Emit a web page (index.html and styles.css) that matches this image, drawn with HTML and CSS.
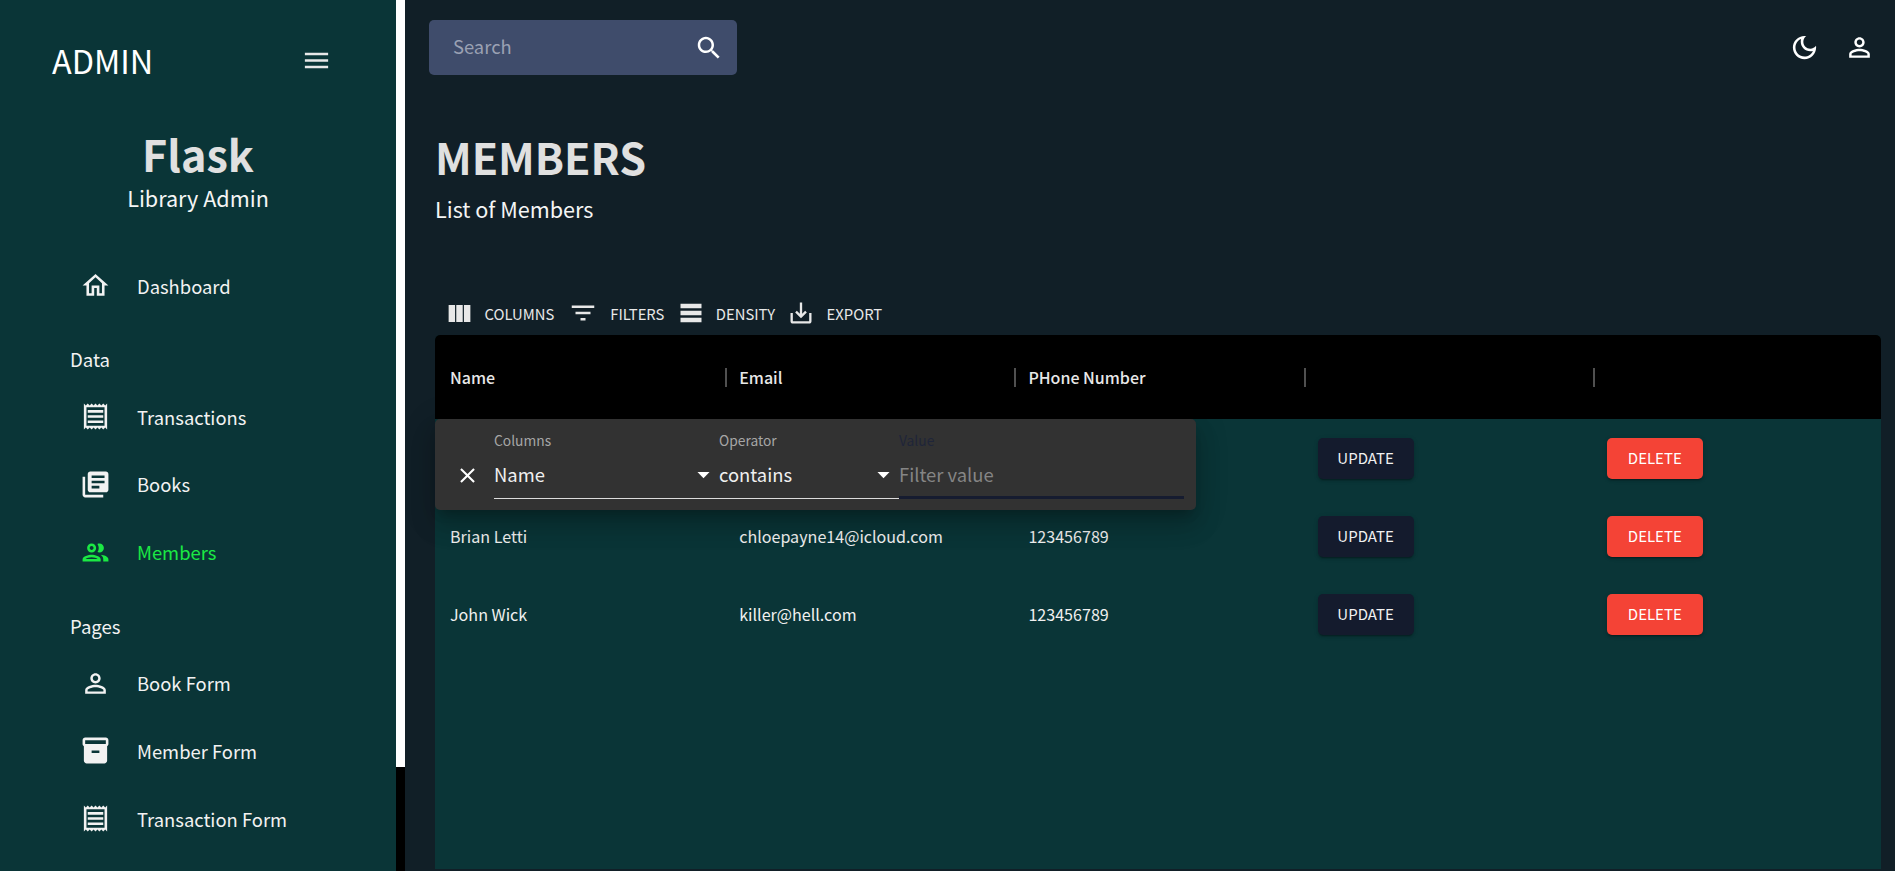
FILE: index.html
```html
<!DOCTYPE html>
<html lang="en">
<head>
  <meta charset="UTF-8">
  <meta name="viewport" content="width=device-width, initial-scale=1.0">
  <title>Library Admin</title>
  <link rel="stylesheet" href="styles.css">
</head>
<body>
  <div class="app">
    <!-- Sidebar -->
    <aside class="sidebar">
      <div class="brand-row">
        <span class="brand">ADMIN</span>
        <svg class="menu-icon" viewBox="0 0 24 24"><path d="M3 18h18v-2H3v2zm0-5h18v-2H3v2zm0-7v2h18V6H3z"/></svg>
      </div>
      <div class="profile">
        <div class="profile-name">Flask</div>
        <div class="profile-role">Library Admin</div>
      </div>
      <nav class="nav">
        <a class="nav-item">
          <svg class="icon" viewBox="0 0 24 24"><path d="M12 5.69l5 4.5V18h-2v-6H9v6H7v-7.81l5-4.5M12 3L2 12h3v8h6v-6h2v6h6v-8h3L12 3z"/></svg>
          Dashboard
        </a>
        <div class="nav-title nav-title-data">Data</div>
        <a class="nav-item">
          <svg class="icon" viewBox="0 0 24 24"><path d="M19.5 3.5 18 2l-1.5 1.5L15 2l-1.5 1.5L12 2l-1.5 1.5L9 2 7.5 3.5 6 2 4.5 3.5 3 2v20l1.5-1.5L6 22l1.5-1.5L9 22l1.5-1.5L12 22l1.5-1.5L15 22l1.5-1.5L18 22l1.5-1.5L21 22V2l-1.5 1.5zM19 19.09H5V4.91h14v14.18zM6 15h12v2H6zm0-4h12v2H6zm0-4h12v2H6z"/></svg>
          Transactions
        </a>
        <a class="nav-item">
          <svg class="icon" viewBox="0 0 24 24"><path d="M4 6H2v14c0 1.1.9 2 2 2h14v-2H4V6zm16-4H8c-1.1 0-2 .9-2 2v12c0 1.1.9 2 2 2h12c1.1 0 2-.9 2-2V4c0-1.1-.9-2-2-2zm-1 9H9V9h10v2zm-4 4H9v-2h6v2zm4-8H9V5h10v2z"/></svg>
          Books
        </a>
        <a class="nav-item active">
          <svg class="icon" viewBox="0 0 24 24"><path d="M9 13.75c-2.34 0-7 1.17-7 3.5V19h14v-1.75c0-2.33-4.66-3.5-7-3.5zM4.34 17c.84-.58 2.87-1.25 4.66-1.25s3.82.67 4.66 1.25H4.34zM9 12c1.93 0 3.5-1.57 3.5-3.5S10.93 5 9 5 5.5 6.57 5.5 8.5 7.07 12 9 12zm0-5c.83 0 1.5.67 1.5 1.5S9.83 10 9 10s-1.5-.67-1.5-1.5S8.17 7 9 7zm7.04 6.81c1.16.84 1.96 1.96 1.96 3.44V19h4v-1.75c0-2.02-3.5-3.17-5.96-3.44zM15 12c1.93 0 3.5-1.57 3.5-3.5S16.93 5 15 5c-.54 0-1.04.13-1.5.35.63.89 1 1.98 1 3.15s-.37 2.26-1 3.15c.46.22.96.35 1.5.35z"/></svg>
          Members
        </a>
        <div class="nav-title nav-title-pages">Pages</div>
        <a class="nav-item">
          <svg class="icon" viewBox="0 0 24 24"><path d="M12 5.9c1.16 0 2.1.94 2.1 2.1s-.94 2.1-2.1 2.1S9.9 9.16 9.9 8s.94-2.1 2.1-2.1m0 9c2.97 0 6.1 1.46 6.1 2.1v1.1H5.9V17c0-.64 3.13-2.1 6.1-2.1M12 4C9.79 4 8 5.79 8 8s1.79 4 4 4 4-1.79 4-4-1.79-4-4-4zm0 9c-2.67 0-8 1.34-8 4v3h16v-3c0-2.66-5.33-4-8-4z"/></svg>
          Book Form
        </a>
        <a class="nav-item">
          <svg class="icon" viewBox="0 0 24 24"><path d="M20 2H4c-1 0-2 .9-2 2v3.01c0 .72.43 1.34 1 1.69V20c0 1.1 1.1 2 2 2h14c.9 0 2-.9 2-2V8.7c.57-.35 1-.97 1-1.69V4c0-1.1-1-2-2-2zm-5 12H9v-2h6v2zm5-7H4V4l16-.02V7z"/></svg>
          Member Form
        </a>
        <a class="nav-item">
          <svg class="icon" viewBox="0 0 24 24"><path d="M19.5 3.5 18 2l-1.5 1.5L15 2l-1.5 1.5L12 2l-1.5 1.5L9 2 7.5 3.5 6 2 4.5 3.5 3 2v20l1.5-1.5L6 22l1.5-1.5L9 22l1.5-1.5L12 22l1.5-1.5L15 22l1.5-1.5L18 22l1.5-1.5L21 22V2l-1.5 1.5zM19 19.09H5V4.91h14v14.18zM6 15h12v2H6zm0-4h12v2H6zm0-4h12v2H6z"/></svg>
          Transaction Form
        </a>
      </nav>
    </aside>

    <!-- White strip next to the sidebar -->
    <div class="strip"></div>

    <main class="main">
      <header class="topbar">
        <div class="search">
          <span class="search-text">Search</span>
          <svg class="icon" viewBox="0 0 24 24"><path d="M15.5 14h-.79l-.28-.27C15.41 12.59 16 11.11 16 9.5 16 5.91 13.09 3 9.5 3S3 5.91 3 9.5 5.91 16 9.5 16c1.61 0 3.09-.59 4.23-1.57l.27.28v.79l5 4.99L20.49 19l-4.99-5zm-6 0C7.01 14 5 11.99 5 9.5S7.01 5 9.5 5 14 7.01 14 9.5 11.99 14 9.5 14z"/></svg>
        </div>
        <div class="top-icons">
          <svg class="icon" viewBox="0 0 24 24"><path d="M9.37 5.51c-.18.64-.27 1.31-.27 1.99 0 4.08 3.32 7.4 7.4 7.4.68 0 1.35-.09 1.99-.27C17.45 17.19 14.93 19 12 19c-3.86 0-7-3.14-7-7 0-2.93 1.81-5.45 4.37-6.49zM12 3c-4.97 0-9 4.03-9 9s4.03 9 9 9 9-4.03 9-9c0-.46-.04-.92-.1-1.36-.98 1.37-2.58 2.26-4.4 2.26-2.98 0-5.4-2.42-5.4-5.4 0-1.81.89-3.42 2.26-4.4-.44-.06-.9-.1-1.36-.1z"/></svg>
          <svg class="icon" viewBox="0 0 24 24"><path d="M12 5.9c1.16 0 2.1.94 2.1 2.1s-.94 2.1-2.1 2.1S9.9 9.16 9.9 8s.94-2.1 2.1-2.1m0 9c2.97 0 6.1 1.46 6.1 2.1v1.1H5.9V17c0-.64 3.13-2.1 6.1-2.1M12 4C9.79 4 8 5.79 8 8s1.79 4 4 4 4-1.79 4-4-1.79-4-4-4zm0 9c-2.67 0-8 1.34-8 4v3h16v-3c0-2.66-5.33-4-8-4z"/></svg>
        </div>
      </header>

      <section class="content">
        <h1 class="page-title">MEMBERS</h1>
        <p class="page-sub">List of Members</p>

        <!-- Grid toolbar -->
        <div class="toolbar">
          <span class="tool tool-columns">
            <svg class="icon" viewBox="0 0 24 24"><path d="M14.67 5v14H9.33V5h5.34zm1 14H21V5h-5.33v14zm-7.34 0V5H3v14h5.33z"/></svg>
            COLUMNS
          </span>
          <span class="tool tool-filters">
            <svg class="icon" viewBox="0 0 24 24"><path d="M10 18h4v-2h-4v2zM3 6v2h18V6H3zm3 7h12v-2H6v2z"/></svg>
            FILTERS
          </span>
          <span class="tool tool-density">
            <svg class="icon" viewBox="0 0 24 24"><path d="M21 8H3V4h18v4zm0 2H3v4h18v-4zm0 6H3v4h18v-4z"/></svg>
            DENSITY
          </span>
          <span class="tool tool-export">
            <svg class="icon" viewBox="0 0 24 24"><path d="M19 12v7H5v-7H3v7c0 1.1.9 2 2 2h14c1.1 0 2-.9 2-2v-7h-2zm-6 .67l2.59-2.58L17 11.5l-5 5-5-5 1.41-1.41L11 12.67V3h2z"/></svg>
            EXPORT
          </span>
        </div>

        <!-- Data grid -->
        <div class="grid">
          <div class="grid-head">
            <div class="head-cell">Name</div>
            <div class="head-cell"><i class="sep"></i>Email</div>
            <div class="head-cell"><i class="sep"></i>PHone Number</div>
            <div class="head-cell"><i class="sep"></i></div>
            <div class="head-cell"><i class="sep"></i></div>
          </div>

          <div class="grid-row">
            <div class="cell"></div>
            <div class="cell"></div>
            <div class="cell"></div>
            <div class="cell"><button class="btn btn-update">UPDATE</button></div>
            <div class="cell"><button class="btn btn-delete">DELETE</button></div>
          </div>
          <div class="grid-row">
            <div class="cell">Brian Letti</div>
            <div class="cell">chloepayne14@icloud.com</div>
            <div class="cell">123456789</div>
            <div class="cell"><button class="btn btn-update">UPDATE</button></div>
            <div class="cell"><button class="btn btn-delete">DELETE</button></div>
          </div>
          <div class="grid-row">
            <div class="cell">John Wick</div>
            <div class="cell">killer@hell.com</div>
            <div class="cell">123456789</div>
            <div class="cell"><button class="btn btn-update">UPDATE</button></div>
            <div class="cell"><button class="btn btn-delete">DELETE</button></div>
          </div>

          <!-- Filter panel, open over the first row -->
          <div class="filter-panel">
            <svg class="icon close-icon" viewBox="0 0 24 24"><path d="M19 6.41 17.59 5 12 10.59 6.41 5 5 6.41 10.59 12 5 17.59 6.41 19 12 13.41 17.59 19 19 17.59 13.41 12z"/></svg>
            <div class="field field-columns">
              <label class="field-label">Columns</label>
              <div class="field-control">
                <span class="field-value">Name</span>
                <svg class="icon arrow-icon" viewBox="0 0 24 24"><path d="M7 10l5 5 5-5z"/></svg>
              </div>
            </div>
            <div class="field field-operator">
              <label class="field-label">Operator</label>
              <div class="field-control">
                <span class="field-value">contains</span>
                <svg class="icon arrow-icon" viewBox="0 0 24 24"><path d="M7 10l5 5 5-5z"/></svg>
              </div>
            </div>
            <div class="field field-input">
              <label class="field-label label-dark">Value</label>
              <div class="field-control control-focus">
                <span class="field-value placeholder">Filter value</span>
              </div>
            </div>
          </div>
        </div>
      </section>
    </main>
  </div>
</body>
</html>
```

FILE: styles.css
```css
* {
  box-sizing: border-box;
}

html, body {
  margin: 0;
  height: 100%;
  overflow: hidden;
}

body {
  font-family: "Noto Sans CJK SC", "Noto Sans", sans-serif;
  color: #e0e0e0;
  background: #000;
}

.app {
  display: flex;
  height: 871px;
}

.icon {
  width: 29px;
  height: 29px;
  fill: currentColor;
  flex: none;
}

/* Sidebar */
.sidebar {
  width: 396px;
  flex: none;
  background: #0a3537;
  overflow: hidden;
}

.brand-row {
  display: flex;
  align-items: center;
  justify-content: space-between;
  padding: 36px 64px 0 52px;
  height: 84px;
}

.brand {
  font-size: 32.4px;
  line-height: 48px;
  color: #fff;
}

.menu-icon {
  width: 31px;
  height: 31px;
  fill: #e8e8e8;
}

.profile {
  text-align: center;
  margin-top: 39px;
}

.profile-name {
  font-size: 43.2px;
  line-height: 60px;
  font-weight: 700;
  color: #e0e0e0;
}

.profile-role {
  font-size: 21.6px;
  line-height: 30px;
  color: #f5f5f5;
}

.nav {
  margin-top: 39px;
}

.nav-item {
  display: flex;
  align-items: center;
  gap: 26px;
  height: 67.8px;
  padding-left: 80px;
  font-size: 18.4px;
  color: #f2f2f2;
}

.nav-item .icon {
  width: 31px;
  height: 31px;
}

.nav-item.active {
  color: #1be944;
}

.nav-title {
  font-size: 18.6px;
  line-height: 28px;
  padding-left: 70px;
  color: #f2f2f2;
}

.nav-title-data {
  margin-top: 25px;
  margin-bottom: 10px;
}

.nav-title-pages {
  margin-top: 26px;
  margin-bottom: 9px;
}

/* Strip between sidebar and main */
.strip {
  width: 9px;
  height: 767px;
  flex: none;
  background: #fff;
}

/* Main area */
.main {
  flex: 1;
  min-width: 0;
  background: #111f27;
}

.topbar {
  display: flex;
  justify-content: space-between;
  align-items: center;
  height: 95px;
  padding: 0 20px 0 24px;
}

.search {
  display: flex;
  align-items: center;
  justify-content: space-between;
  width: 308px;
  height: 55px;
  padding: 0 13px 0 24px;
  background: #3f4c6b;
  border-radius: 5px;
  color: #fff;
}

.search .icon {
  width: 30px;
  height: 30px;
}

.search-text {
  font-size: 18.4px;
  line-height: 24px;
  margin-top: -3px;
  color: #9aa1b3;
}

.top-icons {
  display: flex;
  gap: 24px;
  color: #fff;
}

.top-icons .icon {
  width: 31px;
  height: 31px;
}

.content {
  padding: 33px 14px 0 30px;
}

.page-title {
  margin: 0;
  font-size: 43px;
  line-height: 56px;
  font-weight: 700;
  color: #e0e0e0;
}

.page-sub {
  margin: 10px 0 0;
  font-size: 21.6px;
  line-height: 30px;
  color: #f5f5f5;
}

/* Toolbar */
.toolbar {
  display: flex;
  align-items: center;
  height: 36px;
  margin-top: 71px;
  font-size: 14.8px;
  color: #e8e8e8;
}

.tool {
  display: flex;
  align-items: center;
  gap: 12px;
}

.tool-columns {
  gap: 11px;
  margin-left: 9.5px;
}

.tool-filters {
  margin-left: 14px;
}

.tool-filters .icon {
  width: 30px;
  height: 30px;
}

.tool-density {
  gap: 11px;
  margin-left: 12.5px;
}

.tool-density .icon,
.tool-export .icon {
  width: 28px;
  height: 28px;
}

.tool-export {
  margin-left: 11.5px;
}

/* Data grid */
.grid {
  position: relative;
  height: 534px;
  margin-top: 4px;
  background: #0a3537;
  border-radius: 5px 5px 0 0;
}

.grid-head,
.grid-row {
  display: grid;
  grid-template-columns: repeat(5, 1fr);
}

.grid-head {
  height: 84px;
  background: #000;
  border-radius: 5px 5px 0 0;
}

.head-cell {
  display: flex;
  align-items: center;
  padding-left: 15px;
  font-size: 16px;
  font-weight: 500;
  color: #e8e8e8;
}

.sep {
  width: 2px;
  height: 19px;
  margin: 0 12px 0 -14px;
  background: #505050;
}

.grid-row {
  height: 78px;
}

.cell {
  display: flex;
  align-items: center;
  padding-left: 15px;
  font-size: 16.1px;
  color: #f0f0f0;
}

.btn {
  width: 96px;
  height: 41px;
  padding: 0 0 2px;
  border: 0;
  border-radius: 5px;
  font-family: inherit;
  font-size: 15px;
  font-weight: 400;
  color: #f0f0f0;
  box-shadow: 0 3px 1px -2px rgba(0, 0, 0, 0.2), 0 2px 2px rgba(0, 0, 0, 0.14), 0 1px 5px rgba(0, 0, 0, 0.12);
}

.btn-update {
  background: #141b2d;
}

.btn-delete {
  background: #f44336;
  color: #fff;
}

/* Filter panel */
.filter-panel {
  position: absolute;
  left: 0;
  top: 84px;
  width: 761px;
  height: 91px;
  display: flex;
  padding-left: 59px;
  background: #323232;
  border-radius: 5px;
  box-shadow: 0 8px 10px -5px rgba(0, 0, 0, 0.2), 0 16px 24px 2px rgba(0, 0, 0, 0.14), 0 6px 30px 5px rgba(0, 0, 0, 0.12);
}

.close-icon {
  position: absolute;
  left: 19.5px;
  top: 44px;
  width: 25px;
  height: 25px;
  color: #fff;
}

.field {
  display: flex;
  flex-direction: column;
}

.field-columns {
  width: 225px;
}

.field-operator {
  width: 180px;
}

.field-input {
  width: 285px;
}

.field-label {
  font-size: 13.8px;
  line-height: 20px;
  margin-top: 11px;
  color: #a6a6a6;
}

.label-dark {
  color: #1f2539;
}

.field-control {
  display: flex;
  align-items: center;
  justify-content: space-between;
  height: 49px;
  border-bottom: 1px solid #dcdcdc;
}

.control-focus {
  padding-top: 2px;
  border-bottom: 3px solid #161c30;
}

.field-value {
  font-size: 18.4px;
  color: #f0f0f0;
}

.placeholder {
  color: #858585;
}

.arrow-icon {
  color: #fff;
  margin-right: 1px;
}
```
